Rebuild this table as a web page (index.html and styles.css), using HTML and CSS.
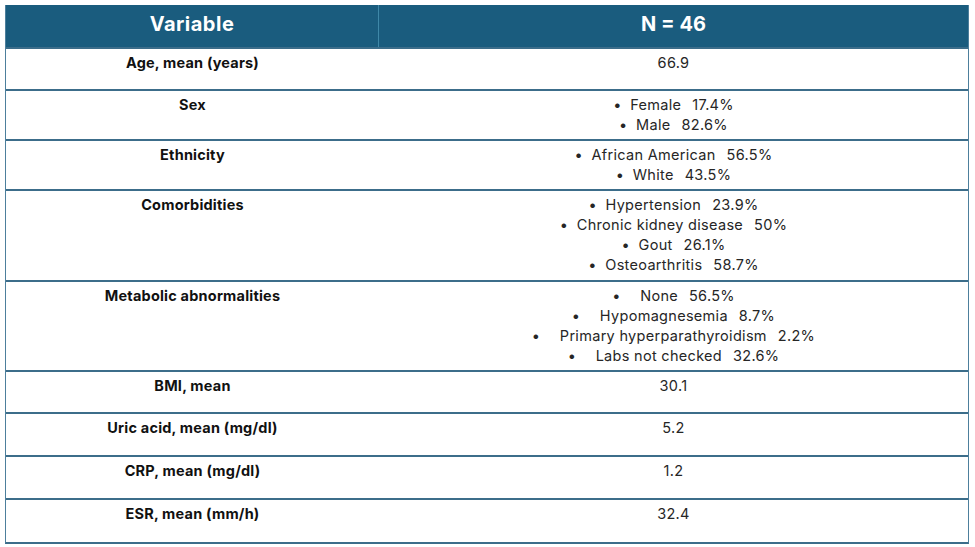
FILE: index.html
```html
<!DOCTYPE html>
<html>
<head>
<meta charset="utf-8">
<link rel="stylesheet" href="styles.css">
</head>
<body>
<div class="table">
  <div class="row head">
    <div class="cell hleft">Variable</div>
    <div class="cell">N = 46</div>
  </div>
  <div class="row r42">
    <div class="cell left">Age, mean (years)</div>
    <div class="cell right">66.9</div>
  </div>
  <div class="row r50">
    <div class="cell left">Sex</div>
    <div class="cell right">
      <div class="li"><span class="b">•</span>Female<span class="v">17.4%</span></div>
      <div class="li"><span class="b">•</span>Male<span class="v">82.6%</span></div>
    </div>
  </div>
  <div class="row r50">
    <div class="cell left">Ethnicity</div>
    <div class="cell right">
      <div class="li"><span class="b">•</span>African American<span class="v">56.5%</span></div>
      <div class="li"><span class="b">•</span>White<span class="v">43.5%</span></div>
    </div>
  </div>
  <div class="row r91">
    <div class="cell left">Comorbidities</div>
    <div class="cell right">
      <div class="li"><span class="b">•</span>Hypertension<span class="v">23.9%</span></div>
      <div class="li"><span class="b">•</span>Chronic kidney disease<span class="v">50%</span></div>
      <div class="li"><span class="b">•</span>Gout<span class="v">26.1%</span></div>
      <div class="li"><span class="b">•</span>Osteoarthritis<span class="v">58.7%</span></div>
    </div>
  </div>
  <div class="row r90">
    <div class="cell left">Metabolic abnormalities</div>
    <div class="cell right">
      <div class="li"><span class="b wide">•</span>None<span class="v">56.5%</span></div>
      <div class="li"><span class="b wide">•</span>Hypomagnesemia<span class="v">8.7%</span></div>
      <div class="li"><span class="b wide">•</span>Primary hyperparathyroidism<span class="v">2.2%</span></div>
      <div class="li"><span class="b wide">•</span>Labs not checked<span class="v">32.6%</span></div>
    </div>
  </div>
  <div class="row r42">
    <div class="cell left">BMI, mean</div>
    <div class="cell right">30.1</div>
  </div>
  <div class="row r43">
    <div class="cell left">Uric acid, mean (mg/dl)</div>
    <div class="cell right">5.2</div>
  </div>
  <div class="row r43">
    <div class="cell left">CRP, mean (mg/dl)</div>
    <div class="cell right">1.2</div>
  </div>
  <div class="row r44 last">
    <div class="cell left">ESR, mean (mm/h)</div>
    <div class="cell right">32.4</div>
  </div>
</div>
</body>
</html>
```
FILE: styles.css
```css
html, body {
  margin: 0;
  padding: 0;
  background: #ffffff;
}
body {
  font-family: Inter, "Liberation Sans", Arial, sans-serif;
  color: #1c1c1c;
  font-size: 14.5px;
}
.table {
  margin: 5px 0 0 5px;
  width: 964px;
  border-left: 1px solid #4d7f9c;
  border-right: 1px solid #4d7f9c;
  border-bottom: 2px solid #3c6d8a;
  box-sizing: border-box;
}
.row {
  display: grid;
  grid-template-columns: 373px 1fr;
  border-top: 2px solid #3c6d8a;
  box-sizing: border-box;
}
.row.head {
  border-top: none;
  background: #1a5c7e;
  height: 42px;
  color: #ffffff;
  font-weight: bold;
  font-size: 20px;
}
.row.head .cell {
  padding-top: 7px;
  line-height: 24px;
  color: #ffffff;
}
.row.head .hleft {
  border-right: 1px solid #3f88a8;
  letter-spacing: 0.5px;
}
.r42 { height: 42px; }
.r43 { height: 43px; }
.r44 { height: 44px; }
.r50 { height: 50px; }
.r90 { height: 90px; }
.r91 { height: 91px; }
.cell {
  text-align: center;
  padding-top: 4px;
  line-height: 20px;
}
.left {
  font-weight: 700;
  color: #111111;
  letter-spacing: 0.2px;
}
.right {
  color: #262626;
  letter-spacing: 0.3px;
}
.li {
  white-space: nowrap;
  height: 20px;
}
.b {
  display: inline-block;
  width: 17px;
  text-align: left;
  line-height: 20px;
}
.b.wide {
  width: 28px;
}
.v {
  margin-left: 11px;
}
```
